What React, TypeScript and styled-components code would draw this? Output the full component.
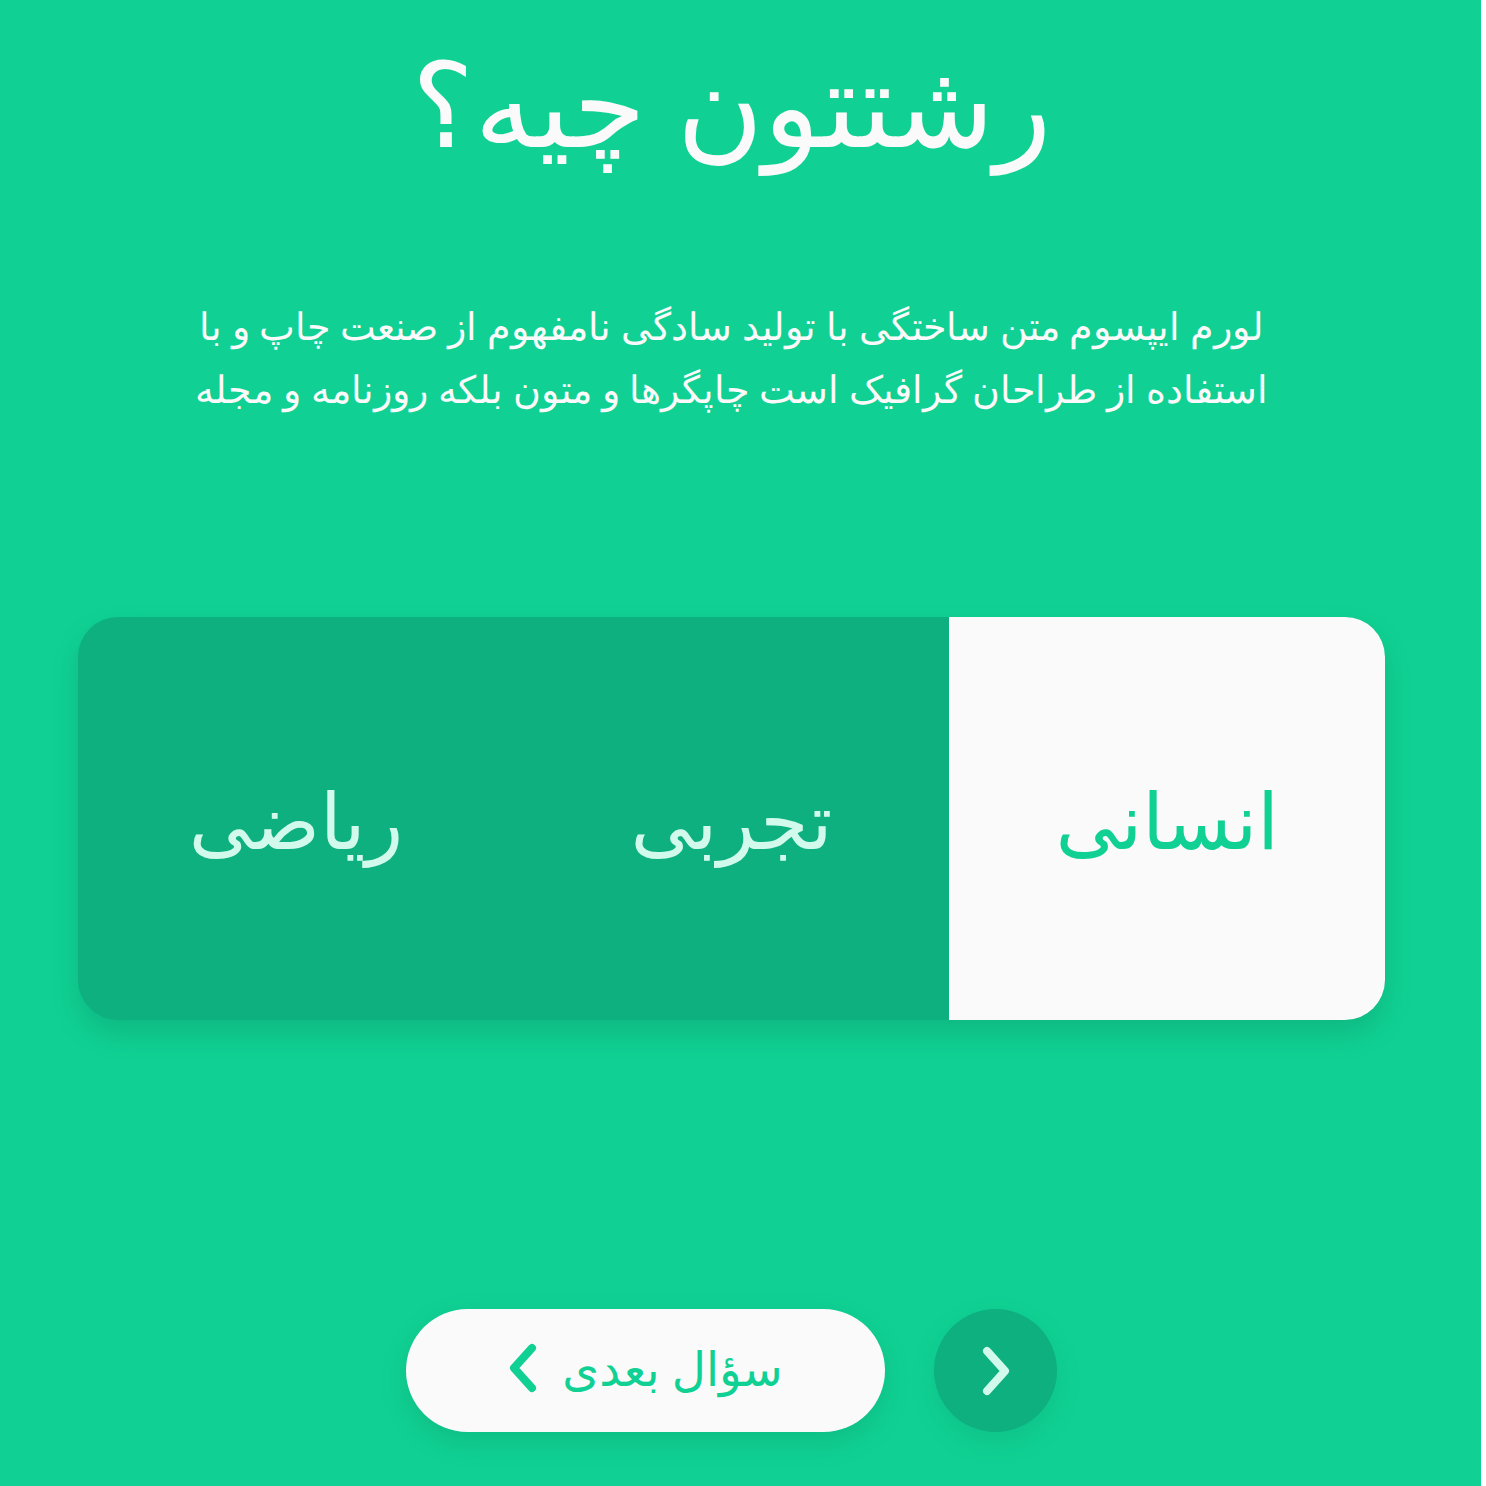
import styled, { createGlobalStyle } from 'styled-components';

const GlobalStyle = createGlobalStyle`
    html, body {
        margin: 0;
        padding: 0;
        background: #ffffff;
    }
    * {
        box-sizing: border-box;
    }
`;

const options = ['انسانی', 'تجربی', 'ریاضی'];

const Chevron = ({ dir }: { dir: 'left' | 'right' }) => (
    <svg width="30" height="50" viewBox="0 0 30 50" fill="none">
        <polyline
            points={dir === 'left' ? '24,5 6,25 24,45' : '6,5 24,25 6,45'}
            stroke="currentColor"
            strokeWidth="8"
            strokeLinecap="round"
            strokeLinejoin="round"
        />
    </svg>
);

const App = () => {
    return (
        <>
            <GlobalStyle />
            <Page>
                <Title>رشتتون چیه؟</Title>
                <Description>
                    لورم ایپسوم متن ساختگی با تولید سادگی نامفهوم از صنعت چاپ و با استفاده از
                    طراحان گرافیک است چاپگرها و متون بلکه روزنامه و مجله
                </Description>
                <OptionCard>
                    {options.map((option, i) => (
                        <Option key={option} $active={i === 0}>
                            {option}
                        </Option>
                    ))}
                </OptionCard>
                <Footer>
                    <BackButton>
                        <Chevron dir="right" />
                    </BackButton>
                    <NextButton>
                        سؤال بعدی
                        <Chevron dir="left" />
                    </NextButton>
                </Footer>
            </Page>
        </>
    );
};

const Page = styled.div`
    direction: rtl;
    width: 1481px;
    min-height: 1486px;
    background: #10d193;
    display: flex;
    flex-direction: column;
    align-items: center;
    padding: 22px 18px 0 0;
    font-family: 'Noto Sans', 'DejaVu Sans', sans-serif;
`;

const Title = styled.h1`
    margin: 0;
    font-size: 118px;
    font-weight: 400;
    line-height: 160px;
    color: #fafafa;
`;

const Description = styled.p`
    margin: 112px 0 0;
    width: 1100px;
    font-size: 38px;
    font-weight: 300;
    line-height: 63px;
    text-align: center;
    color: #fafafa;
`;

const OptionCard = styled.div`
    margin-top: 197px;
    width: 1307px;
    height: 403px;
    display: grid;
    grid-template-columns: repeat(3, 1fr);
    border-radius: 40px;
    overflow: hidden;
    background: #0eb07f;
    box-shadow: 0 14px 30px rgba(0, 0, 0, 0.12);
`;

const Option = styled.div<{ $active: boolean }>`
    display: flex;
    align-items: center;
    justify-content: center;
    font-size: 78px;
    color: ${(p) => (p.$active ? '#10d193' : '#d2faec')};
    background: ${(p) => (p.$active ? '#fafafa' : 'transparent')};
`;

const Footer = styled.div`
    margin-top: 289px;
    display: flex;
    align-items: center;
    gap: 49px;
`;

const BackButton = styled.button`
    width: 123px;
    height: 123px;
    border: none;
    border-radius: 50%;
    background: #0eb07f;
    color: #d2faec;
    display: flex;
    align-items: center;
    justify-content: center;
    box-shadow: 0 10px 30px rgba(0, 0, 0, 0.08);
    padding: 0;
`;

const NextButton = styled.button`
    width: 479px;
    height: 123px;
    border: none;
    border-radius: 62px;
    background: #fafafa;
    color: #10d193;
    display: flex;
    align-items: center;
    justify-content: center;
    gap: 24px;
    font-family: inherit;
    font-size: 47px;
    box-shadow: 0 10px 30px rgba(0, 0, 0, 0.1);
    padding: 0 0 6px;
`;

export default App;
